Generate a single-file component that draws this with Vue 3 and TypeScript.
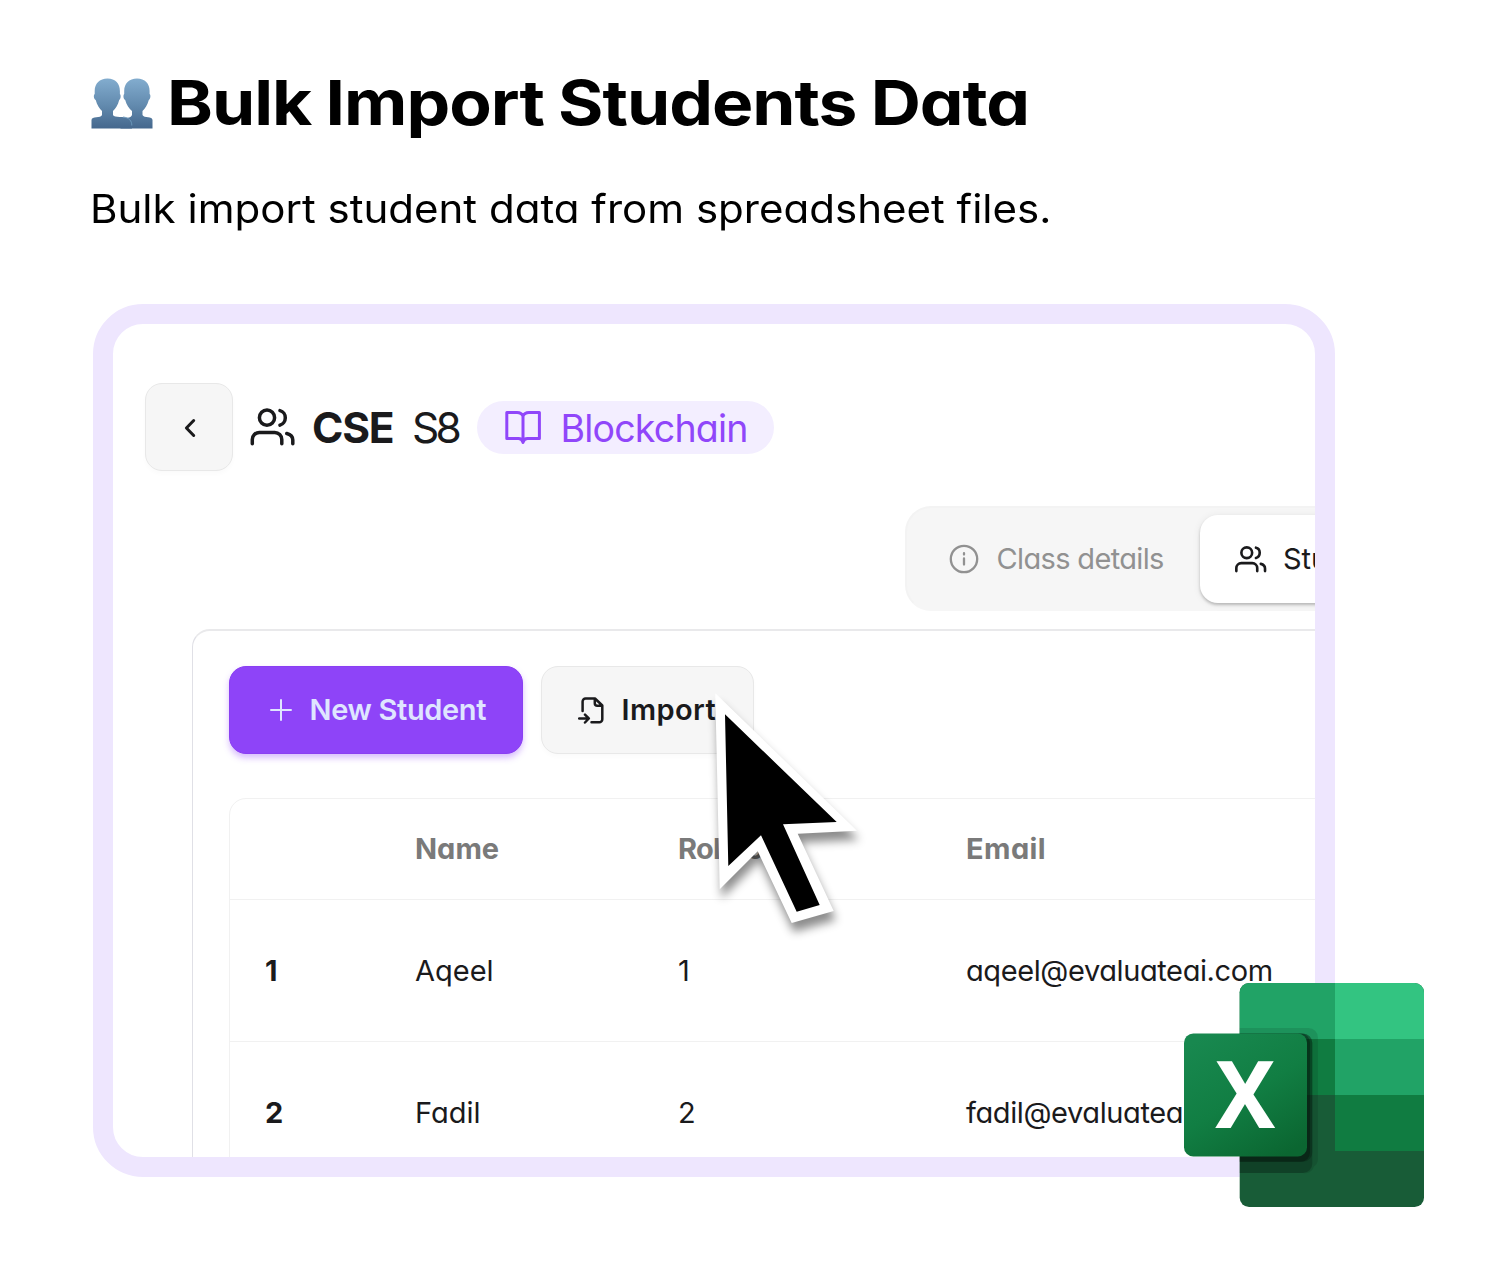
<script setup lang="ts">
interface Student {
  index: number
  name: string
  roll: number
  email: string
}

const students: Student[] = [
  { index: 1, name: 'Aqeel', roll: 1, email: 'aqeel@evaluateai.com' },
  { index: 2, name: 'Fadil', roll: 2, email: 'fadil@evaluateai.com' },
]
</script>

<template>
  <main class="page">
    <h1 class="title">
      <svg class="busts" width="62" height="52" viewBox="0 0 62 52" aria-hidden="true">
        <defs>
          <linearGradient id="bust" x1="0" y1="0" x2="0" y2="52" gradientUnits="userSpaceOnUse">
            <stop offset="0" stop-color="#83adcf" />
            <stop offset="0.5" stop-color="#648cb0" />
            <stop offset="1" stop-color="#43658b" />
          </linearGradient>
        </defs>
        <path fill="url(#bust)" d="M46 .5C54 .5 58.600 5.500 58.600 13V16C60 17 59.500 21 57.800 22C56.500 27 54 30.500 51.500 33V37C53 40.500 61.500 38 61.500 42V50.500H29.500V41C34 39.500 40 40.500 41 37V33C38.200 30.500 35.500 27 34.200 22C32.200 21 32 17 33.200 16V13C33.200 5.500 38 .5 46 .5Z" />
        <path fill="url(#bust)" d="M16.500 .5C24.500 .5 28.900 5.500 28.900 13V16C30.200 17 29.800 21 28.200 22C27 27 24.500 30.500 22 33V37C23.500 40.500 33 37.500 37.500 40.500C40 42.500 41 45 41 50.500H.5V42C.5 38 10 40.500 11 37V33C8.500 30.500 6 27 4.700 22C2.700 21 2.300 17 3.700 16V13C3.700 5.500 8.500 .5 16.500 .5Z" />
        <path fill="none" stroke="#6e9cbe" stroke-width="0.900" d="M32 39C38 39.500 41 43 40.800 47.500" />
      </svg>
      <span class="title-text">Bulk Import Students Data</span>
    </h1>
    <p class="subtitle">Bulk import student data from spreadsheet files.</p>

    <div class="stage">
      <section class="card">
        <header class="class-head">
          <button class="back" aria-label="Back">
            <svg width="14" height="20" viewBox="0 0 14 20"><path d="M10.700 2.500 3.400 10l7.300 7.500" /></svg>
          </button>
          <svg class="users" width="48" height="48" viewBox="0 0 48 48">
            <circle cx="18" cy="13.700" r="7.600" />
            <path d="M3.300 39.700v-4.300a7 7 0 0 1 7-7h15.500a7 7 0 0 1 7 7v4.300M31 6.600c3.200.7 5.300 3.800 5.300 7.100s-2.100 6.500-5.300 7.500M37.800 29.500c4 1 6 3.300 6 6.600v3.600" />
          </svg>
          <strong class="dept">CSE</strong>
          <span class="semester">S8</span>
          <span class="subject">
            <svg width="40" height="38" viewBox="0 0 40 38">
              <path d="M20 7.200C18.800 4.200 16.800 3.600 14 3.600H3.800V29.500H15.500C18 29.500 19.300 30.500 20 33.500C20.700 30.500 22 29.500 24.500 29.500H36.400V3.600H26C23.200 3.600 21.200 4.200 20 7.200ZM20 7.200V33" />
            </svg>
            <span class="subject-text">Blockchain</span>
          </span>
        </header>

        <nav class="tabs">
          <a class="tab tab-details">
            <svg width="30" height="30" viewBox="0 0 30 30">
              <circle cx="15" cy="15" r="13.200" />
              <path d="M15 14.500v6M15 9.200v1.400" />
            </svg>
            <span class="details-text">Class details</span>
          </a>
          <a class="tab tab-active">
            <svg class="users-small" width="34" height="34" viewBox="0 0 48 48">
              <circle cx="18" cy="13.700" r="7.600" />
              <path d="M3.300 39.700v-4.300a7 7 0 0 1 7-7h15.500a7 7 0 0 1 7 7v4.300M31 6.600c3.200.7 5.300 3.800 5.300 7.100s-2.100 6.500-5.300 7.500M37.800 29.500c4 1 6 3.300 6 6.600v3.600" />
            </svg>
            <span class="active-text">Students</span>
          </a>
        </nav>

        <div class="panel">
          <div class="actions">
            <button class="btn btn-primary">
              <svg width="22" height="22" viewBox="0 0 22 22"><path d="M11 1v20M1 11h20" /></svg>
              <span class="new-text">New Student</span>
            </button>
            <button class="btn btn-import">
              <svg width="27" height="29" viewBox="0 0 27 29">
                <path d="M4.600 15V5.500a3 3 0 0 1 3-3H17l7.300 7V23.300a3 3 0 0 1-3 3H13.500M16.800 2.800V7.300a2.500 2.500 0 0 0 2.500 2.500H24M1.200 22.500H10.500M7 18.700l3.800 3.800L7 26.500" />
              </svg>
              <span class="import-text">Import</span>
            </button>
          </div>

          <div class="table">
            <div class="row row-head">
              <span></span>
              <span>Name</span>
              <span class="h-roll">Roll no</span>
              <span class="h-email">Email</span>
            </div>
            <div v-for="s in students" :key="s.index" class="row">
              <b>{{ s.index }}</b>
              <span>{{ s.name }}</span>
              <span>{{ s.roll }}</span>
              <span class="c-email">{{ s.email }}</span>
            </div>
          </div>
        </div>
      </section>

      <svg class="cursor" width="170" height="260" viewBox="700 685 170 260" aria-hidden="true">
        <path fill="#fff" d="M715.300 693.300 857 830.700 797.700 833.700 833.700 911 791.700 923 757.700 851.300 719.700 889.300Z" />
        <path fill="#000" d="M725 714.300 836.700 822 783 824.300 819.700 905 796.700 911.700 761 835.300 728.300 866Z" />
      </svg>

      <svg class="excel" width="240" height="224" viewBox="0 0 240 224" aria-label="Excel">
        <defs>
          <linearGradient id="tile" x1="0.200" y1="0" x2="0.800" y2="1">
            <stop offset="0" stop-color="#18884f" />
            <stop offset="0.500" stop-color="#117e43" />
            <stop offset="1" stop-color="#0b6631" />
          </linearGradient>
          <clipPath id="sheet"><rect x="55.700" width="184.300" height="224" rx="9.300" /></clipPath>
        </defs>
        <g clip-path="url(#sheet)">
          <rect x="55" width="185" height="224" fill="#185c37" />
          <rect x="55" width="96" height="56" fill="#21a366" />
          <rect x="151" width="89" height="56" fill="#33c481" />
          <rect x="55" y="56" width="96" height="56" fill="#107c41" />
          <rect x="151" y="56" width="89" height="56" fill="#21a366" />
          <rect x="151" y="112" width="89" height="56" fill="#107c41" />
          <path opacity="0.100" d="M55 45H124.600A9.300 9.300 0 0 1 133.900 54.300V175A9.300 9.300 0 0 1 130 183.500 9.300 9.300 0 0 1 119 190H55Z" />
          <path opacity="0.200" d="M55 50.500H119A9.300 9.300 0 0 1 128.300 59.800V180.700A9.300 9.300 0 0 1 119 190H55Z" />
          <path opacity="0.200" d="M55 50.500H119A9.300 9.300 0 0 1 128.300 59.800V169.500A9.300 9.300 0 0 1 119 178.800H55Z" />
          <path opacity="0.250" d="M55 50.500H117A9.300 9.300 0 0 1 126 59.800V169.500A9.300 9.300 0 0 1 117 178.800H55Z" />
        </g>
        <rect y="50.500" width="123" height="123" rx="9.300" fill="url(#tile)" />
        <text class="excel-letter" x="31" y="145.300" textLength="60.500" lengthAdjust="spacingAndGlyphs">X</text>
      </svg>
    </div>
  </main>
</template>

<style>
body {
  margin: 0;
  background: #fff;
}
</style>

<style scoped>
.page {
  box-sizing: border-box;
  width: 1491px;
  height: 1283px;
  padding: 62px 0 0 91px;
  overflow: hidden;
  background: #fff;
  font-family: Inter, 'Liberation Sans', sans-serif;
  font-feature-settings: 'cv11';
  color: #1a1a1c;
  white-space: nowrap;
}
.page svg {
  flex: none;
}
.title {
  display: flex;
  align-items: center;
  height: 81px;
  margin: 0;
  font-size: 62px;
  font-weight: 700;
  line-height: 81px;
  color: #000;
}
.busts {
  margin: 2px 14px 0 0;
}
.title-text {
  letter-spacing: -0.9px;
  word-spacing: -1px;
  transform: scaleX(1.12);
  transform-origin: left;
}
.subtitle {
  width: max-content;
  height: 60px;
  margin: 36px 0 0 -1px;
  font-size: 39px;
  line-height: 60px;
  letter-spacing: 0;
  color: #000;
  transform: scaleX(1.078);
  transform-origin: left;
}
.stage {
  position: relative;
  width: 1242px;
  margin: 65px 0 0 2px;
}
.card {
  box-sizing: border-box;
  width: 1242px;
  height: 873px;
  overflow: hidden;
  border: 20px solid #eee6fe;
  border-radius: 50px;
  background: #fff;
}
.class-head {
  display: flex;
  align-items: center;
  height: 88px;
  margin: 59px 0 0 32px;
}
.back {
  box-sizing: border-box;
  display: flex;
  align-items: center;
  justify-content: center;
  width: 88px;
  height: 88px;
  padding: 0;
  border: 1.5px solid #e8e8e8;
  border-radius: 17px;
  background: #f6f6f6;
  box-shadow: 0 3px 5px rgb(0 0 0 / 2%);
}
.back svg,
.users,
.users-small,
.btn svg,
.tab svg,
.subject svg {
  fill: none;
  stroke: currentColor;
  stroke-linecap: round;
  stroke-linejoin: round;
}
.back svg {
  margin: 2px 0 0 2px;
  color: #1a1a1c;
  stroke-width: 3;
}
.users {
  margin: 2px 0 0 16px;
  stroke-width: 3.5;
}
.dept {
  width: 100px;
  margin-left: 15px;
  font-size: 42.500px;
  letter-spacing: -1.3px;
}
.semester {
  width: 65px;
  font-size: 42.500px;
  letter-spacing: -3.8px;
}
.subject {
  box-sizing: border-box;
  display: flex;
  align-items: center;
  width: 297px;
  height: 53px;
  padding-left: 26px;
  border-radius: 27px;
  background: #f3eeff;
  color: #9046fa;
}
.subject svg {
  margin-top: 2px;
  stroke-width: 3;
}
.subject-text {
  margin: 2px 0 0 17.500px;
  font-size: 37.500px;
  letter-spacing: -0.8px;
}
.tabs {
  box-sizing: border-box;
  display: flex;
  width: 700px;
  height: 105px;
  margin: 35px 0 0 791.500px;
  padding: 7px 0 0 9px;
  border: 2px solid #f3f3f3;
  border-bottom-color: #f6f6f6;
  border-radius: 26px;
  background: #f6f6f6;
}
.tab {
  box-sizing: border-box;
  display: flex;
  align-items: center;
  height: 88px;
  font-size: 29px;
}
.tab-details {
  width: 284.500px;
  padding-left: 33px;
  color: #919191;
}
.tab svg {
  stroke-width: 2.3;
}
.details-text {
  margin: -1px 0 0 18px;
  letter-spacing: -0.65px;
}
.active-text {
  margin-top: -1px;
}
.tab-active {
  width: 260px;
  padding-left: 34px;
  border-radius: 18px;
  background: #fff;
  box-shadow: 0 2px 3px rgb(0 0 0 / 22%), 0 1px 8px rgb(0 0 0 / 7%);
}
.tab-active .users-small {
  margin: 2px 15px 0 0;
  stroke-width: 3.7;
}
.panel {
  box-sizing: border-box;
  width: 1300px;
  height: 700px;
  margin: 18px 0 0 79px;
  padding: 35px 0 0 35px;
  border: 2px solid #e9e9eb;
  border-left: 1px solid #e0e0e6;
  border-radius: 18px;
}
.actions {
  display: flex;
  gap: 18px;
  margin-left: 0.500px;
}
.btn {
  box-sizing: border-box;
  display: flex;
  align-items: center;
  height: 88px;
  border-radius: 17px;
  font: 600 29px Inter, 'Liberation Sans', sans-serif;
  font-feature-settings: 'cv11';
}
.btn-primary {
  width: 294px;
  padding: 0 0 0 40px;
  border: 1px solid #8a3ff2;
  background: #8e44f8;
  box-shadow: 0 4px 6px rgb(142 68 248 / 35%);
  color: #dfe5ff;
}
.btn-primary svg {
  stroke-width: 2;
}
.new-text {
  margin: -2px 0 0 18px;
  letter-spacing: -0.35px;
}
.btn-import {
  width: 213px;
  padding: 0 0 0 36px;
  border: 1.5px solid #e8e8e8;
  background: #f6f6f6;
  box-shadow: 0 3px 5px rgb(0 0 0 / 2%);
  color: #1a1a1c;
}
.btn-import svg {
  margin-top: 1px;
  stroke-width: 2.5;
}
.import-text {
  margin: -2px 0 0 17px;
  letter-spacing: 0.4px;
}
.table {
  box-sizing: border-box;
  width: 1250px;
  height: 600px;
  margin: 44px 0 0 1px;
  border: 1px solid #f1f1f1;
  border-radius: 17px;
}
.row {
  box-sizing: border-box;
  display: grid;
  grid-template-columns: 150px 263px 288px 1fr;
  align-items: center;
  height: 142px;
  padding-left: 35px;
  border-bottom: 1.5px solid #f1f1f1;
  font-size: 29px;
}
.row-head {
  height: 101px;
  padding-bottom: 2px;
  font-weight: 700;
  color: #7a7a7a;
}
.h-roll {
  letter-spacing: -0.8px;
  word-spacing: -4px;
}
.h-email {
  letter-spacing: 0.4px;
}
.c-email {
  letter-spacing: -0.4px;
}
.cursor {
  position: absolute;
  top: 381px;
  left: 607px;
  filter: drop-shadow(2px 9px 5px rgb(0 0 0 / 45%));
}
.excel {
  position: absolute;
  top: 679px;
  left: 1091px;
}
.excel-letter {
  fill: #fff;
  font-family: 'Noto Sans', 'Open Sans', sans-serif;
  font-size: 94px;
  font-weight: 700;
}
</style>
